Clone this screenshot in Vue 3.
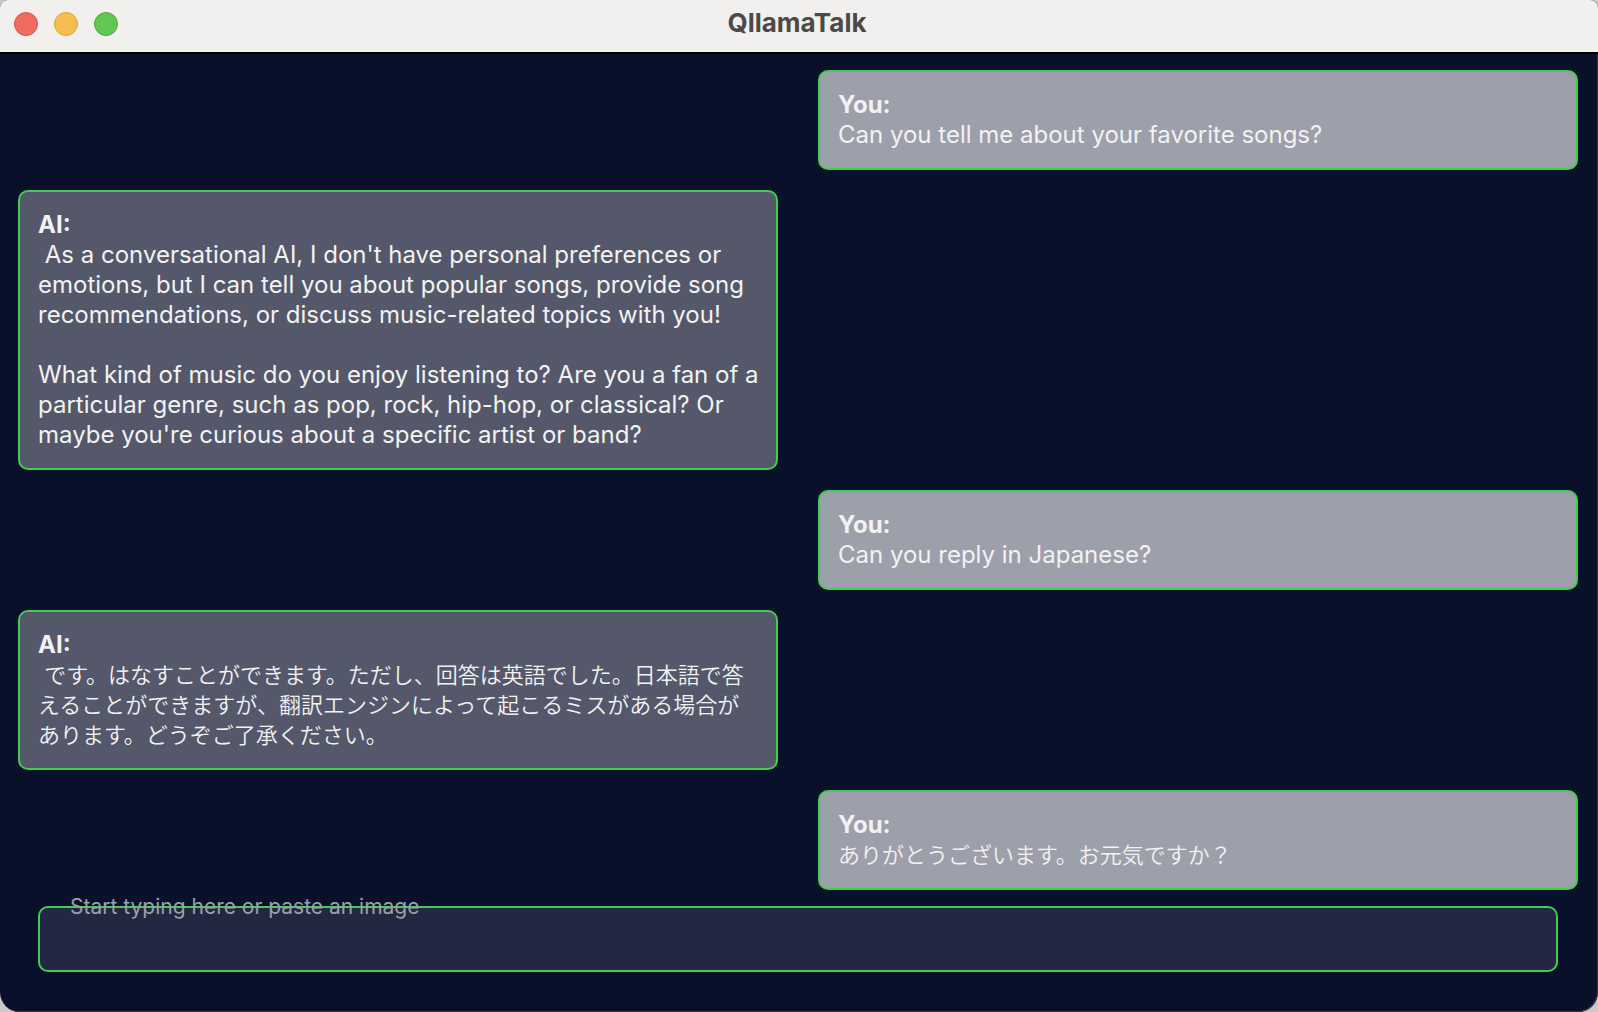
<script setup>
import { ref } from 'vue'

const draft = ref('')

const messages = [
  { id: 1, from: 'user', text: 'Can you tell me about your favorite songs?' },
  {
    id: 2,
    from: 'ai',
    text: " As a conversational AI, I don't have personal preferences or emotions, but I can tell you about popular songs, provide song recommendations, or discuss music-related topics with you!\n\nWhat kind of music do you enjoy listening to? Are you a fan of a particular genre, such as pop, rock, hip-hop, or classical? Or maybe you're curious about a specific artist or band?"
  },
  { id: 3, from: 'user', text: 'Can you reply in Japanese?' },
  {
    id: 4,
    from: 'ai',
    lang: 'ja',
    text: ' です。はなすことができます。ただし、回答は英語でした。日本語で答えることができますが、翻訳エンジンによって起こるミスがある場合があります。どうぞご了承ください。'
  },
  { id: 5, from: 'user', lang: 'ja', text: 'ありがとうございます。お元気ですか？' }
]
</script>

<template>
  <div class="window">
    <header class="titlebar">
      <div class="lights">
        <button type="button" class="light close" aria-label="Close"></button>
        <button type="button" class="light minimize" aria-label="Minimize"></button>
        <button type="button" class="light zoom" aria-label="Zoom"></button>
      </div>
      <h1 class="title">QllamaTalk</h1>
    </header>

    <main class="chat">
      <article v-for="m in messages" :key="m.id" class="bubble" :class="m.from">
        <h2 class="sender">{{ m.from === 'ai' ? 'AI:' : 'You:' }}</h2>
        <p class="text" :class="{ japanese: m.lang === 'ja' }" :lang="m.lang || 'en'">{{ m.text }}</p>
      </article>
    </main>

    <form class="composer" @submit.prevent>
      <input id="draft" v-model="draft" class="field" type="text" autocomplete="off" />
      <label for="draft" class="hint">Start typing here or paste an image</label>
    </form>
  </div>
</template>

<style>
body {
  margin: 0;
  background: #c9c9c9;
}
</style>

<style scoped>
.window {
  box-sizing: border-box;
  display: flex;
  flex-direction: column;
  min-height: 100vh;
  overflow: hidden;
  border-radius: 8px 8px 20px 20px;
  background: #08102a;
  box-shadow: inset -1px -1px 0 #30374c;
  color: #f2f2f2;
  font-family: Inter, "Noto Sans CJK JP", sans-serif;
}

.titlebar {
  display: grid;
  grid-template-columns: 1fr auto 1fr;
  align-items: center;
  height: 52px;
  padding: 0 18px 0 14px;
  border-bottom: 2px solid #000;
  background: #f1f0ee;
}

.lights {
  display: flex;
  gap: 16px;
  padding-bottom: 4px;
}

.light {
  width: 24px;
  height: 24px;
  padding: 0;
  border: 1px solid;
  border-radius: 50%;
}

.close {
  border-color: #d35549;
  background: #ed6b60;
}

.minimize {
  border-color: #d9a43e;
  background: #f5bf4f;
}

.zoom {
  border-color: #50a73f;
  background: #62c655;
}

.title {
  margin: 0;
  padding-bottom: 6px;
  color: #4a4a48;
  font-size: 26px;
  font-weight: 700;
  line-height: 32px;
}

.chat {
  display: flex;
  flex-direction: column;
  gap: 20px;
  padding: 16px 20px 16px 18px;
}

.bubble {
  box-sizing: border-box;
  width: calc(50% - 20px);
  padding: 18px 16px 18px 18px;
  border: 2px solid #41cd52;
  border-radius: 10px;
}

.user {
  align-self: flex-end;
  background: #9d9faa;
}

.ai {
  background: #54586a;
}

.sender,
.text {
  margin: 0;
  font-size: 24px;
  line-height: 30px;
}

.sender {
  font-weight: 700;
}

.text {
  font-weight: 400;
  white-space: pre-wrap;
}

.japanese {
  font-size: 22px;
  font-weight: 350;
}

.composer {
  position: relative;
  padding: 0 40px 40px 38px;
}

.field {
  box-sizing: border-box;
  display: block;
  width: 100%;
  height: 66px;
  padding: 0 30px;
  border: 2px solid #41cd52;
  border-radius: 10px;
  outline: none;
  background: #232741;
  color: #f2f2f2;
  font-family: inherit;
  font-size: 22px;
}

.hint {
  position: absolute;
  top: -13px;
  left: 70px;
  color: #9d9faa;
  font-size: 21px;
  line-height: 28px;
}
</style>
